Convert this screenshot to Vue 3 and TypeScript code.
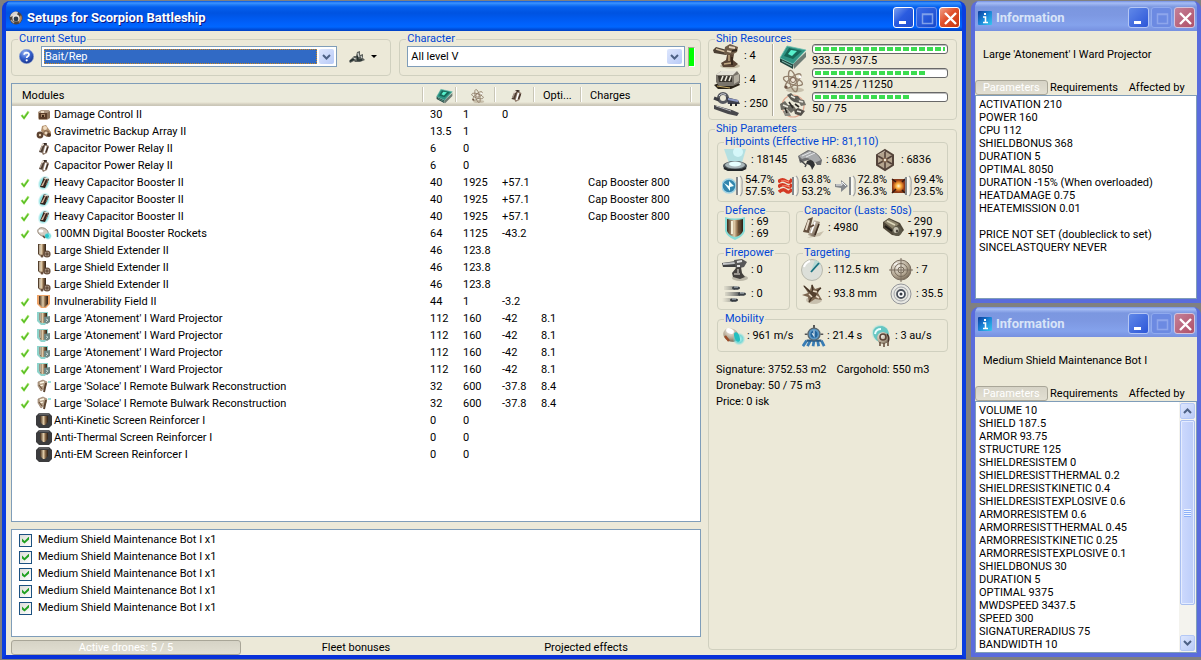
<script setup lang="ts">
interface ModuleRow {
  on: boolean
  icon: string
  name: string
  cpu: string
  grid: string
  cap: string
  optimal: string
  charge: string
}

interface Stat {
  icon: string
  lines: string[]
}

interface InfoWindow {
  id: string
  subject: string
  scroll: boolean
  lines: string[]
}

function row(on: boolean, icon: string, name: string, cpu: string, grid: string, cap = '', optimal = '', charge = ''): ModuleRow {
  return { on, icon, name, cpu, grid, cap, optimal, charge }
}

function repeat(count: number, item: ModuleRow): ModuleRow[] {
  return Array.from({ length: count }, () => ({ ...item }))
}

const modules: ModuleRow[] = [
  row(true, 'm-damage', 'Damage Control II', '30', '1', '0'),
  row(false, 'm-gravi', 'Gravimetric Backup Array II', '13.5', '1'),
  ...repeat(2, row(false, 'm-relay', 'Capacitor Power Relay II', '6', '0')),
  ...repeat(3, row(true, 'm-booster', 'Heavy Capacitor Booster II', '40', '1925', '+57.1', '', 'Cap Booster 800')),
  row(true, 'm-mwd', '100MN Digital Booster Rockets', '64', '1125', '-43.2'),
  ...repeat(3, row(false, 'm-extender', 'Large Shield Extender II', '46', '123.8')),
  row(true, 'm-invul', 'Invulnerability Field II', '44', '1', '-3.2'),
  ...repeat(4, row(true, 'm-ward', "Large 'Atonement' I Ward Projector", '112', '160', '-42', '8.1')),
  ...repeat(2, row(true, 'm-solace', "Large 'Solace' I Remote Bulwark Reconstruction", '32', '600', '-37.8', '8.4')),
  row(false, 'm-rig', 'Anti-Kinetic Screen Reinforcer I', '0', '0'),
  row(false, 'm-rig', 'Anti-Thermal Screen Reinforcer I', '0', '0'),
  row(false, 'm-rig', 'Anti-EM Screen Reinforcer I', '0', '0'),
]

const drones: string[] = Array.from({ length: 5 }, () => 'Medium Shield Maintenance Bot I x1')

const slots: Stat[] = [
  { icon: 'i-turret', lines: [': 4'] },
  { icon: 'i-launcher', lines: [': 4'] },
  { icon: 'i-calib', lines: [': 250'] },
]

const SEGMENT = 8
const BAR_SEGMENTS = 17
const resources = [
  { icon: 'i-cpu', used: 933.5, total: 937.5 },
  { icon: 'i-atom', used: 9114.25, total: 11250 },
  { icon: 'i-drones', used: 50, total: 75 },
]

function fillWidth(used: number, total: number): string {
  return `${Math.ceil((used / total) * BAR_SEGMENTS) * SEGMENT - 2}px`
}

const hull: Stat[] = [
  { icon: 'i-shield', lines: [': 18145'] },
  { icon: 'i-armor', lines: [': 6836'] },
  { icon: 'i-structure', lines: [': 6836'] },
]
const resists: Stat[] = [
  { icon: 'i-em', lines: ['54.7%', '57.5%'] },
  { icon: 'i-thermal', lines: ['63.8%', '53.2%'] },
  { icon: 'i-kinetic', lines: ['72.8%', '36.3%'] },
  { icon: 'i-explosive', lines: ['69.4%', '23.5%'] },
]
const defence: Stat[] = [{ icon: 'i-tank', lines: [': 69', ': 69'] }]
const capacitor: Stat[] = [
  { icon: 'i-cap', lines: [': 4980'] },
  { icon: 'i-battery', lines: ['- 290', '+197.9'] },
]
const firepower: Stat[] = [
  { icon: 'i-gun', lines: [': 0'] },
  { icon: 'i-missiles', lines: [': 0'] },
]
const targeting: Stat[] = [
  { icon: 'i-radar', lines: [': 112.5 km'] },
  { icon: 'i-locks', lines: [': 7'] },
  { icon: 'i-scanres', lines: [': 93.8 mm'] },
  { icon: 'i-sensor', lines: [': 35.5'] },
]
const mobility: Stat[] = [
  { icon: 'i-speed', lines: [': 961 m/s'] },
  { icon: 'i-align', lines: [': 21.4 s'] },
  { icon: 'i-warp', lines: [': 3 au/s'] },
]

const infoWindows: InfoWindow[] = [
  {
    id: 'ward',
    subject: "Large 'Atonement' I Ward Projector",
    scroll: false,
    lines: [
      'ACTIVATION 210', 'POWER 160', 'CPU 112', 'SHIELDBONUS 368', 'DURATION 5', 'OPTIMAL 8050',
      'DURATION -15% (When overloaded)', 'HEATDAMAGE 0.75', 'HEATEMISSION 0.01', '',
      'PRICE NOT SET (doubleclick to set)', 'SINCELASTQUERY NEVER',
    ],
  },
  {
    id: 'drone',
    subject: 'Medium Shield Maintenance Bot I',
    scroll: true,
    lines: [
      'VOLUME 10', 'SHIELD 187.5', 'ARMOR 93.75', 'STRUCTURE 125', 'SHIELDRESISTEM 0',
      'SHIELDRESISTTHERMAL 0.2', 'SHIELDRESISTKINETIC 0.4', 'SHIELDRESISTEXPLOSIVE 0.6',
      'ARMORRESISTEM 0.6', 'ARMORRESISTTHERMAL 0.45', 'ARMORRESISTKINETIC 0.25',
      'ARMORRESISTEXPLOSIVE 0.1', 'SHIELDBONUS 30', 'DURATION 5', 'OPTIMAL 9375',
      'MWDSPEED 3437.5', 'SPEED 300', 'SIGNATURERADIUS 75', 'BANDWIDTH 10',
    ],
  },
]
</script>

<template>
  <div class="desktop">
    <svg class="sprites" width="0" height="0" aria-hidden="true">
      <defs>
        <linearGradient id="g-bronze" x1="0" y1="0" x2="1" y2="0">
          <stop offset="0" stop-color="#3c2818" /><stop offset=".45" stop-color="#e2cdaa" /><stop offset=".65" stop-color="#8c6c4a" /><stop offset="1" stop-color="#2a1c12" />
        </linearGradient>
        <linearGradient id="g-tube" x1="0" y1="0" x2="1" y2="1">
          <stop offset="0" stop-color="#fff" /><stop offset=".5" stop-color="#a89a88" /><stop offset="1" stop-color="#3a2c20" />
        </linearGradient>
        <linearGradient id="g-trail" x1="0" y1="0" x2="1" y2="0">
          <stop offset="0" stop-color="#8c8c84" stop-opacity="0" /><stop offset="1" stop-color="#54585a" />
        </linearGradient>
        <radialGradient id="g-ball" cx=".4" cy=".25" r=".8">
          <stop offset="0" stop-color="#9db8f4" /><stop offset=".5" stop-color="#3560cc" /><stop offset="1" stop-color="#152f84" />
        </radialGradient>
        <radialGradient id="g-cyan">
          <stop offset="0" stop-color="#baf8f4" /><stop offset=".6" stop-color="#5fd4d6" stop-opacity=".8" /><stop offset="1" stop-color="#8ce4e4" stop-opacity="0" />
        </radialGradient>
        <radialGradient id="g-fire">
          <stop offset="0" stop-color="#fffbe0" /><stop offset=".4" stop-color="#ffb340" /><stop offset="1" stop-color="#a03a10" />
        </radialGradient>
        <radialGradient id="g-disc" cx=".35" cy=".3" r=".8">
          <stop offset="0" stop-color="#f4f0e8" /><stop offset=".6" stop-color="#b4a894" /><stop offset="1" stop-color="#6a5c4a" />
        </radialGradient>
        <linearGradient id="g-info" x1="0" y1="0" x2="1" y2="1">
          <stop offset="0" stop-color="#0a3a9c" /><stop offset=".5" stop-color="#1a86d8" /><stop offset="1" stop-color="#35c8f0" />
        </linearGradient>
      </defs>

      <symbol id="tick" viewBox="0 0 10 10">
        <path d="M1.5 5 L4 8 L8.6 1.4" fill="none" stroke="#a4e46c" stroke-width="2.4" />
        <path d="M1.8 5.4 L4 8.2 L8.2 2.4" fill="none" stroke="#56bc24" stroke-width="1.2" />
      </symbol>
      <symbol id="m-damage" viewBox="0 0 16 16">
        <path d="M2 5 L5 3 H13 L14 5 V11 L11 13 H3 L2 11 Z" fill="#b09a84" />
        <path d="M3 6 H11 V12 H3 Z" fill="#5a3c28" /><path d="M11 6 L14 4 V11 L11 12 Z" fill="#8a7058" />
        <path d="M5 4 H8 V6 H5 Z" fill="#ead8c0" /><rect x="5" y="7" width="4" height="3" fill="#a88868" /><rect x="6" y="8" width="2" height="2" fill="#3c2414" />
      </symbol>
      <symbol id="m-gravi" viewBox="0 0 16 16">
        <path d="M6 2 L10 1 L12 4 L15 8 L15 12 L11 11 L10 8 L7 9 L5 7 Z" fill="#b4926e" />
        <path d="M6 10 L9 6 L13 7 L14 11 L11 13 Z" fill="#8c6c50" />
        <circle cx="9" cy="4" r="2" fill="#f0dcc0" /><circle cx="4" cy="11" r="3.4" fill="#5c4230" /><circle cx="4" cy="11" r="1.2" fill="#e0ccb0" />
        <circle cx="10" cy="9" r="1.6" fill="#ecd8bc" /><circle cx="13" cy="11" r="2" fill="#543a28" />
      </symbol>
      <symbol id="m-relay" viewBox="0 0 16 16">
        <path d="M7 2 L10 2 L7 12 L3 11 Z" fill="#4c3c32" /><path d="M5 5 L8 3" stroke="#e8ddd2" stroke-width="1.6" /><path d="M6 5 L4 10" stroke="#a8988a" stroke-width="1.4" />
        <path d="M9 3 L13 5 L11 12 L7 14 L6 12 Z" fill="#8e7a6a" /><path d="M10 5 L8 12" stroke="#fff" stroke-width="1.6" /><path d="M12 6 L10 11" stroke="#3c2c24" stroke-width="1.2" />
        <path d="M8 3 L11 3" stroke="#2c201a" stroke-width="1.4" />
      </symbol>
      <symbol id="m-booster" viewBox="0 0 16 16">
        <ellipse cx="8" cy="8" rx="6" ry="8" transform="rotate(24 8 8)" fill="url(#g-cyan)" />
        <path d="M8 2 L13 4 L9 13 L4 12 Z" fill="#33221c" /><path d="M9 4 L10 4 L7 11 L5 11 Z" fill="#d2b49c" />
        <path d="M12 5 L10 10" stroke="#8a6a5a" /><path d="M8 3 L12 4" stroke="#f4e8dc" stroke-width="1.2" />
      </symbol>
      <symbol id="m-mwd" viewBox="0 0 16 16">
        <ellipse cx="7" cy="6" rx="5.5" ry="4" transform="rotate(25 7 6)" fill="#d4ccc2" stroke="#8a7c6c" stroke-width=".8" />
        <ellipse cx="5" cy="5" rx="2.5" ry="1.6" fill="#fff" /><circle cx="12" cy="10" r="4" fill="url(#g-cyan)" />
        <circle cx="11" cy="10" r="2" fill="#28c4c8" /><path d="M7 10 L9 12" stroke="#5c4838" stroke-width="1.6" />
      </symbol>
      <symbol id="m-extender" viewBox="0 0 16 16">
        <path d="M2 1 H10 V10 L7 13 H4 L2 11 Z" fill="url(#g-bronze)" /><path d="M4 2 V11" stroke="#f4ead8" />
        <circle cx="11" cy="11" r="3.6" fill="#68503e" /><circle cx="11" cy="11" r="2.2" fill="#c8b6a4" />
        <path d="M11 9 V13 M9 11 H13" stroke="#48301e" /><circle cx="6" cy="13" r="1.5" fill="#684e3c" />
      </symbol>
      <symbol id="m-invul" viewBox="0 0 16 16">
        <path d="M1 1 H14 V10 L10 14 H5 L1 10 Z" fill="#eda368" /><path d="M3 2 H12 V10 L9 13 H6 L3 10 Z" fill="url(#g-bronze)" />
      </symbol>
      <symbol id="m-ward" viewBox="0 0 16 16">
        <path d="M1 1 H12 V10 L9 14 H5 L1 10 Z" fill="#8ed4cc" /><path d="M3 2 H11 V9 L8 12 H5 L3 9 Z" fill="url(#g-bronze)" />
        <path d="M4 2 V10" stroke="#d8ece4" /><path d="M8 6 L14 5 V11 L11 13 L8 11 Z" fill="#708884" /><path d="M10 8 L12 9 L10 11" stroke="#c4d8d4" fill="none" />
      </symbol>
      <symbol id="m-solace" viewBox="0 0 16 16">
        <path d="M2 3 L7 1 L11 3 L9 9 L5 12 L2 7 Z" fill="#b8a48c" stroke="#8a705a" stroke-width=".6" />
        <path d="M4 4 L8 3 M4 7 L7 6" stroke="#fff8e8" stroke-width="1.3" /><path d="M10 4 L8 13" stroke="#5c4430" stroke-width="2" /><path d="M3 6 L6 10" stroke="#6c523c" stroke-width="1.2" />
        <path d="M12 3 L15 3" stroke="#76d4cc" stroke-width="1.4" />
      </symbol>
      <symbol id="m-rig" viewBox="0 0 16 16">
        <path d="M3 0 H13 L16 3 V12 L13 15 H3 L0 12 V3 Z" fill="#3c3c3e" /><path d="M3 1 H13" stroke="#828284" />
        <path d="M4 3 H12 V9 L9 12 H7 L4 9 Z" fill="url(#g-bronze)" />
      </symbol>

      <symbol id="i-cpu" viewBox="0 0 28 26">
        <path d="M1 14 L14 20 L14 25 L1 18 Z" fill="#20443e" /><path d="M14 20 L27 8 V13 L15 25 Z" fill="#6c7c74" />
        <path d="M8 2 L27 6 L14 20 L1 14 Z" fill="#2f9484" stroke="#6ec0b0" stroke-width=".8" /><path d="M10 4 L23 7 L14 15 L5 12 Z" fill="#176858" />
        <path d="M12 6 L18 7 L13 12 L9 10 Z" fill="#58f0cc" /><path d="M3 17 L13 22" stroke="#9cdccc" stroke-width=".8" />
      </symbol>
      <symbol id="i-atom" viewBox="0 0 28 26">
        <ellipse cx="16" cy="22" rx="9" ry="2.5" fill="#c8c0ac" /><g fill="none" stroke="#94826e" stroke-width="1.4">
          <ellipse cx="14" cy="13" rx="10" ry="3.6" transform="rotate(18 14 13)" /><ellipse cx="14" cy="13" rx="11" ry="3.6" transform="rotate(75 14 13)" /><ellipse cx="14" cy="13" rx="10" ry="3.6" transform="rotate(-42 14 13)" />
        </g>
        <circle cx="14" cy="12" r="2.5" fill="#f2e8da" stroke="#7c6654" /><circle cx="7" cy="19" r="1.6" fill="#6c5444" /><circle cx="21" cy="9" r="1.4" fill="#fff" />
      </symbol>
      <symbol id="i-drones" viewBox="0 0 28 26">
        <circle cx="14" cy="14" r="11" fill="none" stroke="#e0a890" stroke-width="1.2" />
        <path d="M8 3 L12 1 L15 4 L19 4 L22 8 L20 11 L15 10 L12 8 Z" fill="#5c5a54" /><path d="M18 7 L25 8 L27 13 L22 14 Z" fill="#74726a" />
        <path d="M1 12 L6 9 L9 13 L14 13 L17 17 L12 21 L8 17 L2 18 Z" fill="#6c6a62" /><path d="M4 19 L9 18 L12 24 L6 24 Z" fill="#8c8a82" />
        <path d="M15 18 L19 16 L26 19 L22 24 L16 22 Z" fill="#54504a" /><path d="M12 4 L16 6 M4 13 L9 15 M18 19 L22 20 M20 9 L24 10" stroke="#e8e6dc" stroke-width="1.6" />
        <path d="M10 10 L14 16 M16 12 L20 15 M6 16 L8 21" stroke="#2c2a26" stroke-width="1.6" />
      </symbol>
      <symbol id="i-turret" viewBox="0 0 28 26">
        <ellipse cx="17" cy="23" rx="10" ry="2.5" fill="#c4bca4" />
        <path d="M0 7 L3 4 L14 7 L13 12 L1 10 Z" fill="#4c4034" /><path d="M3 6 L13 9" stroke="#d0bc9c" stroke-width="1.6" />
        <path d="M12 4 L17 1 L25 4 L24 9 L17 13 L11 11 Z" fill="#6e5c48" /><path d="M16 4 L22 5 M14 8 L18 9" stroke="#e4d4ba" stroke-width="1.8" /><path d="M19 8 L24 7" stroke="#2e241a" stroke-width="2" />
        <path d="M14 12 L21 11 L20 17 L25 21 L21 24 H10 L8 20 L13 17 Z" fill="#594434" /><path d="M11 21 L18 20 M16 12 V18" stroke="#c0a882" stroke-width="1.5" /><path d="M19 14 V22" stroke="#2e2016" stroke-width="1.5" />
      </symbol>
      <symbol id="i-launcher" viewBox="0 0 28 26">
        <path d="M1 18 L8 15 H25 L27 18 L18 22 H5 Z" fill="#292318" /><path d="M4 19 L17 21" stroke="#c8ac68" />
        <path d="M3 8 L8 4 H24 L27 8 V16 L20 19 H6 L3 15 Z" fill="#78736a" /><path d="M3 8 L8 4 H24 L20 8 Z" fill="#e4e1d6" />
        <path d="M5 9 H19 V15 H6 Z" fill="#37332c" /><path d="M8 14 L10 9 M12 14 L14 9 M16 14 L18 9" stroke="#e8e4d8" stroke-width="1.6" /><path d="M21 9 L26 7 V14 L21 17 Z" fill="#b4afa2" />
      </symbol>
      <symbol id="i-calib" viewBox="0 0 28 26">
        <path d="M1 14 L19 19 L26 22 L24 25 L15 23 L1 18 Z" fill="#48484c" /><path d="M3 15 L18 20" stroke="#b4b4b8" />
        <circle cx="10" cy="7" r="4.5" fill="none" stroke="#56585e" stroke-width="3" /><path d="M6 5 Q9 1 13 4" fill="none" stroke="#d2d4dc" /><path d="M1 7 L6 9" stroke="#3c3c42" stroke-width="3" />
        <path d="M13 6 L25 9 L27 13 L15 13 Z" fill="#3e414e" /><path d="M15 8 L25 10" stroke="#8c98c4" stroke-width="2" /><path d="M18 12 V15 M23 12 V15" stroke="#2c2c30" stroke-width="2" />
      </symbol>
      <symbol id="i-shield" viewBox="0 0 26 24">
        <path d="M2 1 H24 L19 18 H8 Z" fill="#96dce8" opacity=".65" /><circle cx="16" cy="4" r="5" fill="#d8fafc" opacity=".9" />
        <ellipse cx="13" cy="18" rx="12" ry="5" fill="#4c5458" /><ellipse cx="13" cy="17" rx="10" ry="3.5" fill="#a9b7ba" />
        <ellipse cx="13" cy="16" rx="6" ry="2.5" fill="#e6ffff" /><path d="M2 20 L6 22 H20 L24 20" stroke="#24282a" stroke-width="2" fill="none" />
      </symbol>
      <symbol id="i-armor" viewBox="0 0 26 24">
        <path d="M1 8 L11 2 Q20 3 25 12 L24 17 L20 17 Q17 11 11 12 L3 15 Z" fill="#6c6d6f" />
        <path d="M2 8 L12 3 Q20 4 24 12 L17 15 Q12 8 5 11 Z" fill="#a8aaac" /><path d="M10 13 Q16 10 18 17 L15 22 Q14 16 9 16 Z" fill="#303234" />
        <path d="M5 8 L14 4 M9 9 L18 5" stroke="#e4e6e8" /><path d="M3 12 L9 17 L8 19" stroke="#48494b" fill="none" stroke-width="1.5" />
      </symbol>
      <symbol id="i-structure" viewBox="0 0 26 24">
        <path d="M13 2 L21 7 V17 L13 22 L5 17 V7 Z" fill="#b4a48e" stroke="#54443a" stroke-width="2" />
        <path d="M13 3 V21 M6 8 L20 16 M20 8 L6 16" stroke="#54423a" stroke-width="1.6" /><circle cx="13" cy="12" r="2.6" fill="#80664e" /><circle cx="13" cy="12" r="1.2" fill="#f0e6d6" />
        <path d="M6 7 L13 3" stroke="#d8ccba" stroke-width=".8" />
      </symbol>
      <symbol id="bracket" viewBox="0 0 22 24">
        <path d="M15 3 V21" stroke="#84888c" stroke-width="2" /><path d="M17 3 V21" stroke="#fff" stroke-width="1.4" />
        <path d="M18 2 Q21 4 20 12 Q21 20 18 22" stroke="#a4a6a8" stroke-width="1.2" fill="none" />
      </symbol>
      <symbol id="i-em" viewBox="0 0 22 24">
        <circle cx="7" cy="12" r="7" fill="#3286ae" /><circle cx="7" cy="12" r="7" fill="none" stroke="#a4d4e4" stroke-width="1.5" />
        <path d="M2 9 L7 12 L7 7 L12 12 L8 13 L8 17 Z" fill="#f2ffff" /><use href="#bracket" width="22" height="24" />
      </symbol>
      <symbol id="i-thermal" viewBox="0 0 22 24">
        <path d="M0 8 Q4 4 8 7 T14 5 M0 13 Q4 9 8 12 T14 10 M1 18 Q5 14 8 17 T14 15" fill="none" stroke="#d43a24" stroke-width="3.4" />
        <path d="M3 7 Q7 6 11 8 M4 12 Q8 11 12 13" fill="none" stroke="#ff927a" /><use href="#bracket" width="22" height="24" />
      </symbol>
      <symbol id="i-kinetic" viewBox="0 0 22 24">
        <path d="M0 10 H6 V6 L13 12 L6 18 V14 L0 13 Z" fill="#85898d" /><path d="M1 11 H7 V8 L11 12" stroke="#f4f6f8" fill="none" />
        <use href="#bracket" width="22" height="24" />
      </symbol>
      <symbol id="i-explosive" viewBox="0 0 22 24">
        <rect x="1" y="5" width="13" height="14" fill="#883c1c" /><circle cx="7.5" cy="12" r="6" fill="url(#g-fire)" />
        <path d="M1 5 L5 8 M14 5 L11 8 M1 19 L5 15 M14 19 L11 16" stroke="#391a10" stroke-width="1.5" /><use href="#bracket" width="22" height="24" />
      </symbol>
      <symbol id="i-tank" viewBox="0 0 24 24">
        <path d="M2 1 Q12 4 22 1 V15 Q20 21 12 24 Q4 21 2 15 Z" fill="#86dcd6" /><path d="M4 3 Q12 5 20 3 V15 Q18 20 12 21 Q6 20 4 15 Z" fill="url(#g-bronze)" />
        <path d="M9 5 V18" stroke="#f4eed8" stroke-width="2" /><path d="M16 5 V17" stroke="#54402c" />
      </symbol>
      <symbol id="i-cap" viewBox="0 0 24 24">
        <path d="M6 22 L19 20 L23 15 L14 18 Z" fill="#c8c0ac" /><path d="M7 3 L12 1 L8 17 L2 16 Z" fill="#64503e" /><path d="M8 4 L5 14" stroke="#e6dac8" stroke-width="2" />
        <path d="M13 4 L19 6 L14 21 L7 19 Z" fill="url(#g-tube)" /><path d="M14 6 L10 17" stroke="#fff" stroke-width="1.7" /><path d="M18 8 L14 19" stroke="#3c2c20" stroke-width="1.6" />
        <path d="M9 11 L13 9" stroke="#594232" stroke-width="1.6" />
      </symbol>
      <symbol id="i-battery" viewBox="0 0 24 24">
        <path d="M2 6 L8 2 L19 7 L23 14 L18 20 L11 19 L2 12 Z" fill="#504839" /><path d="M3 6 L8 3 L18 8 L12 13 Z" fill="#8e866e" /><path d="M6 5 L14 9" stroke="#dcd5ba" stroke-width="1.8" />
        <ellipse cx="16" cy="15" rx="5" ry="5" fill="#5c5848" /><ellipse cx="15" cy="14" rx="2.6" ry="3" fill="#c5c1b0" /><ellipse cx="16" cy="15" rx="1.2" ry="1.5" fill="#48443a" />
        <path d="M4 10 L11 15" stroke="#1f1c16" stroke-width="2" />
      </symbol>
      <symbol id="i-gun" viewBox="0 0 26 24">
        <ellipse cx="18" cy="20" rx="8" ry="3" fill="#bcb8a8" /><path d="M0 5 L14 3 V9 L1 9 Z" fill="#3f4042" /><path d="M1 6 L13 5" stroke="#c4c6c8" stroke-width="2" />
        <path d="M12 2 L20 1 L25 4 L22 9 L14 11 Z" fill="#585858" /><path d="M15 4 L20 3 M15 8 L18 8" stroke="#e0e0e0" stroke-width="1.8" />
        <path d="M14 10 L19 9 L20 15 L23 19 L18 21 L11 19 L10 15 Z" fill="#44413d" /><path d="M12 16 H18 M16 11 V15" stroke="#b6b2aa" stroke-width="1.5" />
      </symbol>
      <symbol id="i-missiles" viewBox="0 0 26 24">
        <path d="M2 4 H13 V8 H2 Z M3 10 H18 V14 H3 Z M0 16 H11 V20 H0 Z" fill="url(#g-trail)" />
        <ellipse cx="14" cy="6" rx="4" ry="1.8" fill="#3c4248" /><ellipse cx="20" cy="12" rx="4" ry="1.8" fill="#3c4248" /><ellipse cx="12" cy="18" rx="4" ry="1.8" fill="#343a40" />
        <path d="M12 5 H16 M18 11 H22 M10 17 H14" stroke="#c4ced4" />
      </symbol>
      <symbol id="i-radar" viewBox="0 0 24 24">
        <circle cx="11" cy="12" r="10.5" fill="#dcdfd9" stroke="#b8b8ac" /><path d="M10 13 L14 2 A11 11 0 0 1 20 6 Z" fill="#b7d8d4" /><path d="M10 14 L18 5" stroke="#187080" stroke-width="1.8" />
        <path d="M3 9 A9 9 0 0 1 9 3" stroke="#fff" fill="none" stroke-width="2" />
      </symbol>
      <symbol id="i-locks" viewBox="0 0 24 24">
        <circle cx="12" cy="12" r="10" fill="url(#g-disc)" stroke="#7c7062" /><circle cx="12" cy="12" r="6.5" fill="none" stroke="#766a5a" /><circle cx="12" cy="12" r="3" fill="none" stroke="#766a5a" />
        <path d="M12 0 V24 M0 12 H24" stroke="#7c7062" /><path d="M5 7 L8 5" stroke="#fff" />
      </symbol>
      <symbol id="i-scanres" viewBox="0 0 24 24">
        <ellipse cx="13" cy="18" rx="8" ry="4" fill="#c8c0ae" /><path d="M2 3 L9 8 L11 2 L14 7 L20 5 L17 11 L21 18 L14 17 L8 21 L7 15 L1 13 L7 11 Z" fill="#7c6650" />
        <path d="M3 4 L9 10 M11 3 L12 9 M20 6 L14 11 M8 20 L11 15" stroke="#3f3022" stroke-width="1.3" /><circle cx="12" cy="12" r="3.6" fill="#54402e" /><path d="M8 12 L11 15 M12 9 L16 10 M15 14 L18 16" stroke="#eadbc6" stroke-width="1.6" />
      </symbol>
      <symbol id="i-sensor" viewBox="0 0 24 24">
        <circle cx="12" cy="12" r="10" fill="#e8e8e2" stroke="#94969a" /><circle cx="12" cy="12" r="7" fill="none" stroke="#a2a4a8" />
        <circle cx="12" cy="12" r="4" fill="#fff" stroke="#4e545e" stroke-width="1.8" /><circle cx="12" cy="12" r="1.5" fill="#343a44" />
      </symbol>
      <symbol id="i-speed" viewBox="0 0 24 24">
        <ellipse cx="9" cy="11" rx="8" ry="6.5" transform="rotate(28 9 11)" fill="url(#g-disc)" /><ellipse cx="8" cy="7" rx="4" ry="2.6" transform="rotate(25 8 7)" fill="#fff" />
        <path d="M3 12 L7 17" stroke="#9c4c28" stroke-width="2.4" /><circle cx="17" cy="15" r="6.5" fill="url(#g-cyan)" /><ellipse cx="15" cy="13" rx="2.5" ry="5" transform="rotate(-20 15 13)" fill="#23bfc0" />
      </symbol>
      <symbol id="i-align" viewBox="0 0 26 24">
        <path d="M1 23 L5 17 M6 23 L9 17 M12 23 L13 17 M18 23 L17 17 M24 23 L21 17" fill="none" stroke="#387cb4" stroke-width="3" /><path d="M5 17 H21" stroke="#285c88" stroke-width="2.4" />
        <path d="M13 0 V4" stroke="#4c4c4c" stroke-width="2" /><circle cx="13" cy="10" r="6.5" fill="#5b97c4" stroke="#59676f" stroke-width="1.4" /><circle cx="13" cy="10" r="3.8" fill="#23649c" />
        <path d="M13 6 V12 L11 9" stroke="#d8e6ef" fill="none" stroke-width="1.2" /><path d="M3 10 H6 M20 10 H23" stroke="#555" stroke-width="1.6" />
      </symbol>
      <symbol id="i-warp" viewBox="0 0 24 24">
        <circle cx="10" cy="9" r="9" fill="url(#g-cyan)" /><path d="M3 9 Q3 2 12 2 Q18 3 19 10 L12 19 Q4 17 3 9 Z" fill="#66c6c2" />
        <path d="M5 10 Q6 5 11 5" stroke="#eaffff" stroke-width="2" fill="none" />
        <circle cx="13" cy="14" r="6" fill="url(#g-disc)" /><circle cx="13" cy="13" r="3" fill="none" stroke="#5c4436" stroke-width="1.6" /><path d="M17 10 Q20 14 18 18" stroke="#48342a" stroke-width="1.6" fill="none" />
        <path d="M10 18 V22 M14 19 V23 M18 18 V22" stroke="#67503e" stroke-width="1.6" />
      </symbol>

      <symbol id="logo" viewBox="0 0 14 14">
        <circle cx="7" cy="7" r="6.5" fill="#4c443e" /><path d="M1 6 A6 6 0 0 1 9 1 L8 4 Z" fill="#d8d4d0" /><path d="M12 4 A6 6 0 0 1 10 12 L9 9 Z" fill="#b4885c" />
        <circle cx="7" cy="7" r="3.6" fill="#e8e4e0" /><circle cx="7" cy="8" r="2.4" fill="#2a3a4a" /><path d="M2 9 L5 12" stroke="#a8a09a" stroke-width="1.4" />
      </symbol>
      <symbol id="info-logo" viewBox="0 0 14 14">
        <rect width="14" height="14" rx="1" fill="url(#g-info)" /><rect x="6" y="2" width="2" height="2" fill="#fff" /><path d="M5 6 H7.5 V11 M5 11.5 H10" stroke="#fff" stroke-width="1.6" fill="none" />
      </symbol>
      <symbol id="help" viewBox="0 0 14 14">
        <circle cx="7" cy="7" r="6.7" fill="url(#g-ball)" stroke="#8ea6d8" stroke-width=".6" />
        <path d="M4.8 5.4 Q5 3.3 7.1 3.3 Q9.4 3.4 9.3 5.2 Q9.2 6.3 8 7 Q7.2 7.5 7.2 8.5" fill="none" stroke="#fff" stroke-width="1.6" /><circle cx="7.2" cy="10.6" r="1" fill="#fff" />
      </symbol>
      <symbol id="ship" viewBox="0 0 16 14">
        <path d="M0 11 L5 6 L7 6 L8 2 L11 1 L11 5 L14 4 L14 8 L16 10 L11 12 L6 12 L5 11 L1 13 Z" fill="#5c605c" />
        <path d="M4 8 L7 9 M9 3 L10 7 M12 6 L13 8" stroke="#cfd2ce" stroke-width="1.2" /><path d="M1 11 L5 9 M8 10 L13 10 M8 6 L9 9" stroke="#24302e" stroke-width="1.5" />
      </symbol>
      <symbol id="chevron" viewBox="0 0 9 6"><path d="M1 1 L4.5 4.5 L8 1" fill="none" stroke="#4d6185" stroke-width="2" /></symbol>
      <symbol id="w-min" viewBox="0 0 21 21"><path d="M5 14.5 H12" stroke="#fff" stroke-width="3" /></symbol>
      <symbol id="w-max" viewBox="0 0 21 21"><path d="M5.5 6 H15.5 V15.5 H5.5 Z M5 6.5 H16" fill="none" stroke="currentColor" stroke-width="1.5" /></symbol>
      <symbol id="w-close" viewBox="0 0 21 21"><path d="M5 5 L16 16 M16 5 L5 16" stroke="#fff" stroke-width="2.4" /></symbol>
    </svg>

    <main class="window main-window">
      <header class="title-bar">
        <svg class="title-icon"><use href="#logo" /></svg>
        <h1 class="title-text">Setups for Scorpion Battleship</h1>
        <button class="win-btn" aria-label="Minimize"><svg><use href="#w-min" /></svg></button>
        <button class="win-btn off" aria-label="Maximize" disabled><svg><use href="#w-max" /></svg></button>
        <button class="win-btn close" aria-label="Close"><svg><use href="#w-close" /></svg></button>
      </header>

      <div class="main-body">
        <section class="left">
          <div class="top-row">
            <fieldset class="group setup">
              <legend>Current Setup</legend>
              <div class="combo-row">
                <svg class="help"><use href="#help" /></svg>
                <span class="combo focused">
                  <select aria-label="Current setup"><option>Bait/Rep</option></select>
                  <span class="drop"><svg><use href="#chevron" /></svg></span>
                </span>
                <button class="ship-btn" aria-label="Ship menu"><svg class="ship"><use href="#ship" /></svg><span class="caret"></span></button>
              </div>
            </fieldset>
            <fieldset class="group character">
              <legend>Character</legend>
              <div class="combo-row">
                <span class="combo">
                  <select aria-label="Character"><option>All level V</option></select>
                  <span class="drop"><svg><use href="#chevron" /></svg></span>
                </span>
                <span class="skill-light"></span>
              </div>
            </fieldset>
          </div>

          <div class="list-box modules">
            <table>
              <colgroup>
                <col /><col class="c-cpu" /><col class="c-grid" /><col class="c-cap" /><col class="c-opt" /><col class="c-charge" /><col class="c-end" />
              </colgroup>
              <thead>
                <tr>
                  <th>Modules</th>
                  <th aria-label="CPU"><svg class="head-icon"><use href="#i-cpu" /></svg></th>
                  <th aria-label="Powergrid"><svg class="head-icon"><use href="#i-atom" /></svg></th>
                  <th aria-label="Capacitor"><svg class="head-icon"><use href="#m-relay" /></svg></th>
                  <th>Opti...</th>
                  <th>Charges</th>
                  <th></th>
                </tr>
              </thead>
              <tbody>
                <tr v-for="(m, i) in modules" :key="i">
                  <td>
                    <span class="mod">
                      <span class="tick"><svg v-if="m.on"><use href="#tick" /></svg></span>
                      <svg class="mod-icon"><use :href="'#' + m.icon" /></svg>{{ m.name }}
                    </span>
                  </td>
                  <td>{{ m.cpu }}</td>
                  <td>{{ m.grid }}</td>
                  <td>{{ m.cap }}</td>
                  <td>{{ m.optimal }}</td>
                  <td>{{ m.charge }}</td>
                  <td></td>
                </tr>
              </tbody>
            </table>
          </div>

          <div class="list-box drones">
            <label v-for="(d, i) in drones" :key="i"><input type="checkbox" checked />{{ d }}</label>
          </div>

          <nav class="tabs">
            <button class="tab active">Active drones: 5 / 5</button>
            <button class="tab">Fleet bonuses</button>
            <button class="tab">Projected effects</button>
          </nav>
        </section>

        <section class="right">
          <fieldset class="group">
            <legend>Ship Resources</legend>
            <div class="resources">
              <div class="slots">
                <div v-for="s in slots" :key="s.icon" class="stat"><svg class="big"><use :href="'#' + s.icon" /></svg><span>{{ s.lines[0] }}</span></div>
              </div>
              <div class="meters">
                <div v-for="r in resources" :key="r.icon" class="meter">
                  <svg class="big"><use :href="'#' + r.icon" /></svg>
                  <div class="meter-main">
                    <div class="bar" role="progressbar" :aria-valuenow="r.used" :aria-valuemax="r.total" :aria-label="r.icon.slice(2)">
                      <div class="fill" :style="{ width: fillWidth(r.used, r.total) }"></div>
                    </div>
                    <div>{{ r.used }} / {{ r.total }}</div>
                  </div>
                </div>
              </div>
            </div>
          </fieldset>

          <fieldset class="group params">
            <legend>Ship Parameters</legend>
            <div class="param-grid">
              <fieldset class="group wide">
                <legend>Hitpoints (Effective HP: 81,110)</legend>
                <div class="stats three">
                  <div v-for="s in hull" :key="s.icon" class="stat"><svg class="mid"><use :href="'#' + s.icon" /></svg><span>{{ s.lines[0] }}</span></div>
                </div>
                <div class="stats four">
                  <div v-for="s in resists" :key="s.icon" class="stat"><svg class="small"><use :href="'#' + s.icon" /></svg><span><span v-for="l in s.lines" :key="l" class="line">{{ l }}</span></span></div>
                </div>
              </fieldset>
              <fieldset class="group">
                <legend>Defence</legend>
                <div class="stats">
                  <div v-for="s in defence" :key="s.icon" class="stat"><svg class="mid"><use :href="'#' + s.icon" /></svg><span><span v-for="(l, i) in s.lines" :key="i" class="line">{{ l }}</span></span></div>
                </div>
              </fieldset>
              <fieldset class="group">
                <legend>Capacitor (Lasts: 50s)</legend>
                <div class="stats capacitor">
                  <div v-for="s in capacitor" :key="s.icon" class="stat"><svg class="norm"><use :href="'#' + s.icon" /></svg><span><span v-for="l in s.lines" :key="l" class="line">{{ l }}</span></span></div>
                </div>
              </fieldset>
              <fieldset class="group">
                <legend>Firepower</legend>
                <div class="stats">
                  <div v-for="s in firepower" :key="s.icon" class="stat"><svg class="mid"><use :href="'#' + s.icon" /></svg><span>{{ s.lines[0] }}</span></div>
                </div>
              </fieldset>
              <fieldset class="group">
                <legend>Targeting</legend>
                <div class="stats targeting">
                  <div v-for="s in targeting" :key="s.icon" class="stat"><svg class="norm"><use :href="'#' + s.icon" /></svg><span>{{ s.lines[0] }}</span></div>
                </div>
              </fieldset>
              <fieldset class="group wide">
                <legend>Mobility</legend>
                <div class="stats mobility">
                  <div v-for="s in mobility" :key="s.icon" class="stat"><svg class="norm"><use :href="'#' + s.icon" /></svg><span>{{ s.lines[0] }}</span></div>
                </div>
              </fieldset>
            </div>
            <div class="summary">
              <div class="pair"><span>Signature: 3752.53 m2</span><span>Cargohold: 550 m3</span></div>
              <div>Dronebay: 50 / 75 m3</div>
              <div>Price: 0 isk</div>
            </div>
          </fieldset>
        </section>
      </div>
    </main>

    <aside class="side">
      <section v-for="w in infoWindows" :key="w.id" class="window info" :class="w.id">
        <header class="title-bar">
          <svg class="title-icon"><use href="#info-logo" /></svg>
          <h2 class="title-text">Information</h2>
          <button class="win-btn" aria-label="Minimize"><svg><use href="#w-min" /></svg></button>
          <button class="win-btn off" aria-label="Maximize" disabled><svg><use href="#w-max" /></svg></button>
          <button class="win-btn close" aria-label="Close"><svg><use href="#w-close" /></svg></button>
        </header>
        <div class="info-body">
          <p class="subject">{{ w.subject }}</p>
          <nav class="info-tabs">
            <button class="tab active">Parameters</button>
            <button class="tab">Requirements</button>
            <button class="tab">Affected by</button>
          </nav>
          <div class="info-list">
            <ul><li v-for="(l, i) in w.lines" :key="i">{{ l }}</li></ul>
            <div v-if="w.scroll" class="scrollbar">
              <button class="drop" aria-label="Scroll up"><svg class="flip"><use href="#chevron" /></svg></button>
              <div class="track"><div class="thumb"><span class="grip"></span></div></div>
              <button class="drop" aria-label="Scroll down"><svg><use href="#chevron" /></svg></button>
            </div>
          </div>
        </div>
      </section>
    </aside>
  </div>
</template>

<style>
html, body { margin: 0; background: #808080; }
</style>

<style scoped>
.desktop {
  display: flex;
  gap: 5px;
  box-sizing: border-box;
  height: 100vh;
  padding: 1px 0 1px 2px;
  overflow: hidden;
  background: #808080;
  font: 11px/12px Roboto, "Liberation Sans", sans-serif;
  color: #000;
}
.desktop *, .desktop *::before { box-sizing: border-box; }
.desktop button, .desktop select { font: inherit; color: inherit; border: 0; padding: 0; margin: 0; background: none; }
.sprites { position: absolute; }
svg { display: block; flex: none; }

.window {
  display: flex;
  flex-direction: column;
  min-width: 0;
  min-height: 0;
  border-radius: 8px 8px 0 0;
  overflow: hidden;
}
.main-window {
  flex: 1;
  border: solid #0831d9;
  border-width: 0 4px 4px;
  border-color: #0a3ee0 #0a3ee0 #0831d9;
  background: #0a50e8;
}
.title-bar {
  display: flex;
  flex: none;
  align-items: center;
  gap: 2px;
  height: 30px;
  padding: 3px 2px 0 3px;
  background: linear-gradient(#0058e6 0, #3f94ff 2px, #2a86fa 3px, #0560ee 6px, #0053e1 12px, #0060fb 22px, #0066ff 26px, #0050dd 28px, #0040c4 30px);
}
.title-icon { width: 14px; height: 14px; }
.title-text {
  flex: 1;
  margin: 0;
  padding-left: 2px;
  font: 700 13px/18px Roboto, "Liberation Sans", sans-serif;
  color: #fff;
  text-shadow: 1px 1px #0a1883;
  white-space: nowrap;
}
.win-btn svg { width: 21px; height: 21px; }
.desktop .win-btn {
  display: grid;
  place-items: center;
  width: 21px;
  height: 21px;
  border: 1px solid #fff;
  border-radius: 3px;
  background: linear-gradient(135deg, #7ba0f0, #2a5be0 45%, #1f4fd0);
}
.desktop .win-btn.off { border-color: #6f94ee; background: linear-gradient(135deg, #3b6ce8, #1648cc); color: #7fa0ea; }
.desktop .win-btn.close { background: linear-gradient(135deg, #f0a088, #e0502c 45%, #c8360e); }

.main-body {
  display: grid;
  grid-template-columns: minmax(0, 1fr) 249px;
  gap: 7px;
  flex: 1;
  min-height: 0;
  padding: 3px 5px 0;
  background: #ece9d8;
}
.left, .right { display: flex; flex-direction: column; min-height: 0; min-width: 0; }
.right { gap: 4px; padding-bottom: 5px; }

.group {
  min-width: 0;
  margin: 0;
  padding: 0 0 3px 4px;
  border: 1px solid #d0d0bf;
  border-radius: 4px;
}
.group > legend { margin-left: 2px; padding: 0 1px; line-height: 10px; color: #0046d5; white-space: nowrap; }

.top-row { display: flex; gap: 8px; height: 42px; margin-bottom: 7px; }
.setup { flex: 381 1 0; }
.character { flex: 301 1 0; }
.combo-row { display: flex; align-items: center; height: 25px; padding: 0 3px; }
.character .combo-row { padding-right: 5px; }
.help { width: 15px; height: 15px; margin-right: 7px; }
.combo { display: flex; flex: 1; height: 21px; padding: 2px; border: 1px solid #7f9db9; background: #fff; }
.combo select { flex: 1; min-width: 0; appearance: none; outline: none; text-indent: 1px; line-height: 15px; }
.desktop .combo.focused select { background: #316ac5; color: #fff; outline: 1px dotted #d08a20; outline-offset: -1px; }
.desktop .drop {
  display: grid;
  place-items: center;
  flex: none;
  width: 15px;
  margin-left: 2px;
  border-radius: 2px;
  background: linear-gradient(135deg, #dde6fd, #b9cbf7);
}
.drop svg { width: 9px; height: 6px; }
.flip { transform: rotate(180deg); }
.ship-btn { display: flex; align-items: center; gap: 6px; }
.desktop .ship-btn { margin: 0 10px 0 12px; }
.ship { width: 16px; height: 14px; }
.caret { border: solid transparent; border-width: 3px 3px 0; border-top-color: #000; }
.skill-light { width: 7px; height: 20px; margin-left: 3px; border: 1px solid; border-color: #a8a890 #fff #fff #a8a890; background: #0f0; }

.list-box { min-height: 0; overflow: hidden; border: 1px solid #7f9db9; background: #fff; }
.modules { flex: 443 1 0; margin-bottom: 7px; }
.drones { flex: 104 1 0; margin-bottom: 3px; padding: 2px 7px; }
table { width: 100%; table-layout: fixed; border-collapse: separate; border-spacing: 0; }
.c-cpu { width: 33px; }
.c-grid { width: 39px; }
.c-cap { width: 39px; }
.c-opt { width: 47px; }
.c-charge { width: 110px; }
.c-end { width: 10px; }
th {
  height: 22px;
  padding: 1px 0 0 10px;
  background: linear-gradient(90deg, #c9c6b6 1px, #fff 1px, #fff 2px, transparent 2px) 0 3px / 100% 15px no-repeat, linear-gradient(#ebeadb 18px, #e2decd 19px, #cbc7b8 21px);
  font-weight: 400;
  text-align: left;
  white-space: nowrap;
}
th:first-child { background: linear-gradient(#ebeadb 18px, #e2decd 19px, #cbc7b8 21px); }
.head-icon { width: 17px; height: 16px; margin-left: 4px; }
td { height: 17px; padding: 0 0 0 8px; line-height: 17px; white-space: nowrap; }
.mod { display: flex; align-items: center; height: 17px; }
.tick { width: 16px; }
.tick svg { width: 10px; height: 10px; }
.mod-icon { width: 16px; height: 16px; margin-right: 2px; }

.drones label { display: flex; align-items: center; gap: 6px; height: 17px; }
.drones input {
  display: grid;
  place-items: center;
  appearance: none;
  width: 13px;
  height: 13px;
  margin: 0;
  border: 1px solid #1c5180;
  background: linear-gradient(135deg, #dcdcd7, #fff);
}
.drones input:checked::before {
  content: "";
  width: 7px;
  height: 7px;
  background: #21a121;
  clip-path: polygon(0 29%, 36% 64%, 100% 0, 100% 43%, 36% 100%, 0 71%);
}
.tabs { display: grid; grid-template-columns: repeat(3, 1fr); height: 15px; }
.desktop .tab { line-height: 13px; text-align: center; white-space: nowrap; }
.desktop .tab.active {
  border: 1px solid #a9a698;
  border-radius: 3px;
  background: linear-gradient(#d6d3c6, #e2dfd2);
  line-height: 11px;
  color: #fff;
}

.stat { display: flex; align-items: center; height: 24px; white-space: nowrap; }
.line { display: block; }
.big { width: 28px; height: 26px; }
.mid { width: 26px; height: 24px; margin-right: 3px; }
.small { width: 22px; height: 24px; margin-right: 1px; }
.norm { width: 24px; height: 24px; margin-right: 3px; }
.resources { display: flex; gap: 6px; padding-right: 8px; }
.slots { width: 60px; border-right: 1px solid #aca899; box-shadow: 1px 0 #fff; }
.slots .big { margin-right: 3px; }
.meters { flex: 1; min-width: 0; }
.meter { display: flex; gap: 5px; height: 24px; }
.meter-main { flex: 1; min-width: 0; }
.bar { height: 10px; margin-bottom: 1px; padding: 2px; border: 1px solid #686868; border-radius: 3px; background: #fff; box-shadow: inset 0 1px #bebebe; overflow: hidden; }
.fill { max-width: 100%; height: 4px; background: repeating-linear-gradient(90deg, #3cdc50 0, #3cdc50 6px, #fff 6px, #fff 8px); }

.params { flex: 1; }
.param-grid { display: grid; grid-template-columns: 73px minmax(0, 1fr); gap: 4px 6px; padding: 3px 8px 0 4px; }
.wide { grid-column: 1 / -1; }
.three { display: grid; grid-template-columns: repeat(3, 1fr); padding-top: 1px; margin-bottom: 2px; }
.four { display: grid; grid-template-columns: repeat(4, 1fr); }
.capacitor { display: grid; grid-template-columns: 80px 1fr; }
.targeting { display: grid; grid-template-columns: 88px 1fr; }
.mobility { display: grid; grid-template-columns: 80px 68px 1fr; }
.mobility .norm { margin-right: 1px; }
.summary { padding: 10px 0 0 3px; line-height: 16px; }
.pair { display: flex; gap: 10px; }

.side { display: flex; flex-direction: column; gap: 4px; flex: none; width: 230px; padding-bottom: 2px; }
.info { border: 4px solid #5a6cdc; border-top: 0; background: #7b97e0; }
.ward { flex: 302 1 0; }
.drone { flex: 350 1 0; }
.info .title-bar { background: linear-gradient(#7590e4 0, #a5bdf5 2px, #7b97e0 6px, #7d98e2 14px, #84a2ec 24px, #7690e0 30px); }
.info .title-text { color: #d8e4f8; text-shadow: none; }
.info .win-btn { border-color: #b4c6f4; background: linear-gradient(135deg, #6088e8, #2c56d8); }
.info .win-btn.off { border-color: #90aaee; background: #6c8ae2; color: #8ea6ec; }
.info .win-btn.close { border-color: #d4c4dc; background: linear-gradient(135deg, #c48098, #b05068); }
.info-body { display: flex; flex-direction: column; flex: 1; min-height: 0; background: #ece9d8; }
.subject { margin: 0; padding: 18px 8px 19px; }
.info-tabs { display: grid; grid-template-columns: repeat(3, 1fr); height: 15px; padding-right: 4px; }
.info-list { display: flex; flex: 1; min-height: 0; border: 1px solid #7f9db9; background: #fff; }
.info-list ul { flex: 1; margin: 0; padding: 2px 3px 0; overflow: hidden; list-style: none; }
.info-list li { height: 13px; line-height: 13px; white-space: nowrap; }
.scrollbar { display: flex; flex-direction: column; width: 17px; padding: 1px; background: #f4f3ee; }
.desktop .scrollbar .drop { width: 15px; height: 16px; margin: 0; border: 1px solid #b4c8f6; }
.track { flex: 1; padding-top: 1px; }
.thumb { display: grid; place-items: center; height: 86%; border: 1px solid #a9bff0; border-radius: 2px; background: linear-gradient(90deg, #cdd9fd, #bccdf9); box-shadow: inset 0 0 0 1px #e4ecff; }
.grip { width: 7px; height: 8px; background: repeating-linear-gradient(#eef4fe 0, #eef4fe 1px, #8cb0f8 1px, #8cb0f8 2px); }
</style>
